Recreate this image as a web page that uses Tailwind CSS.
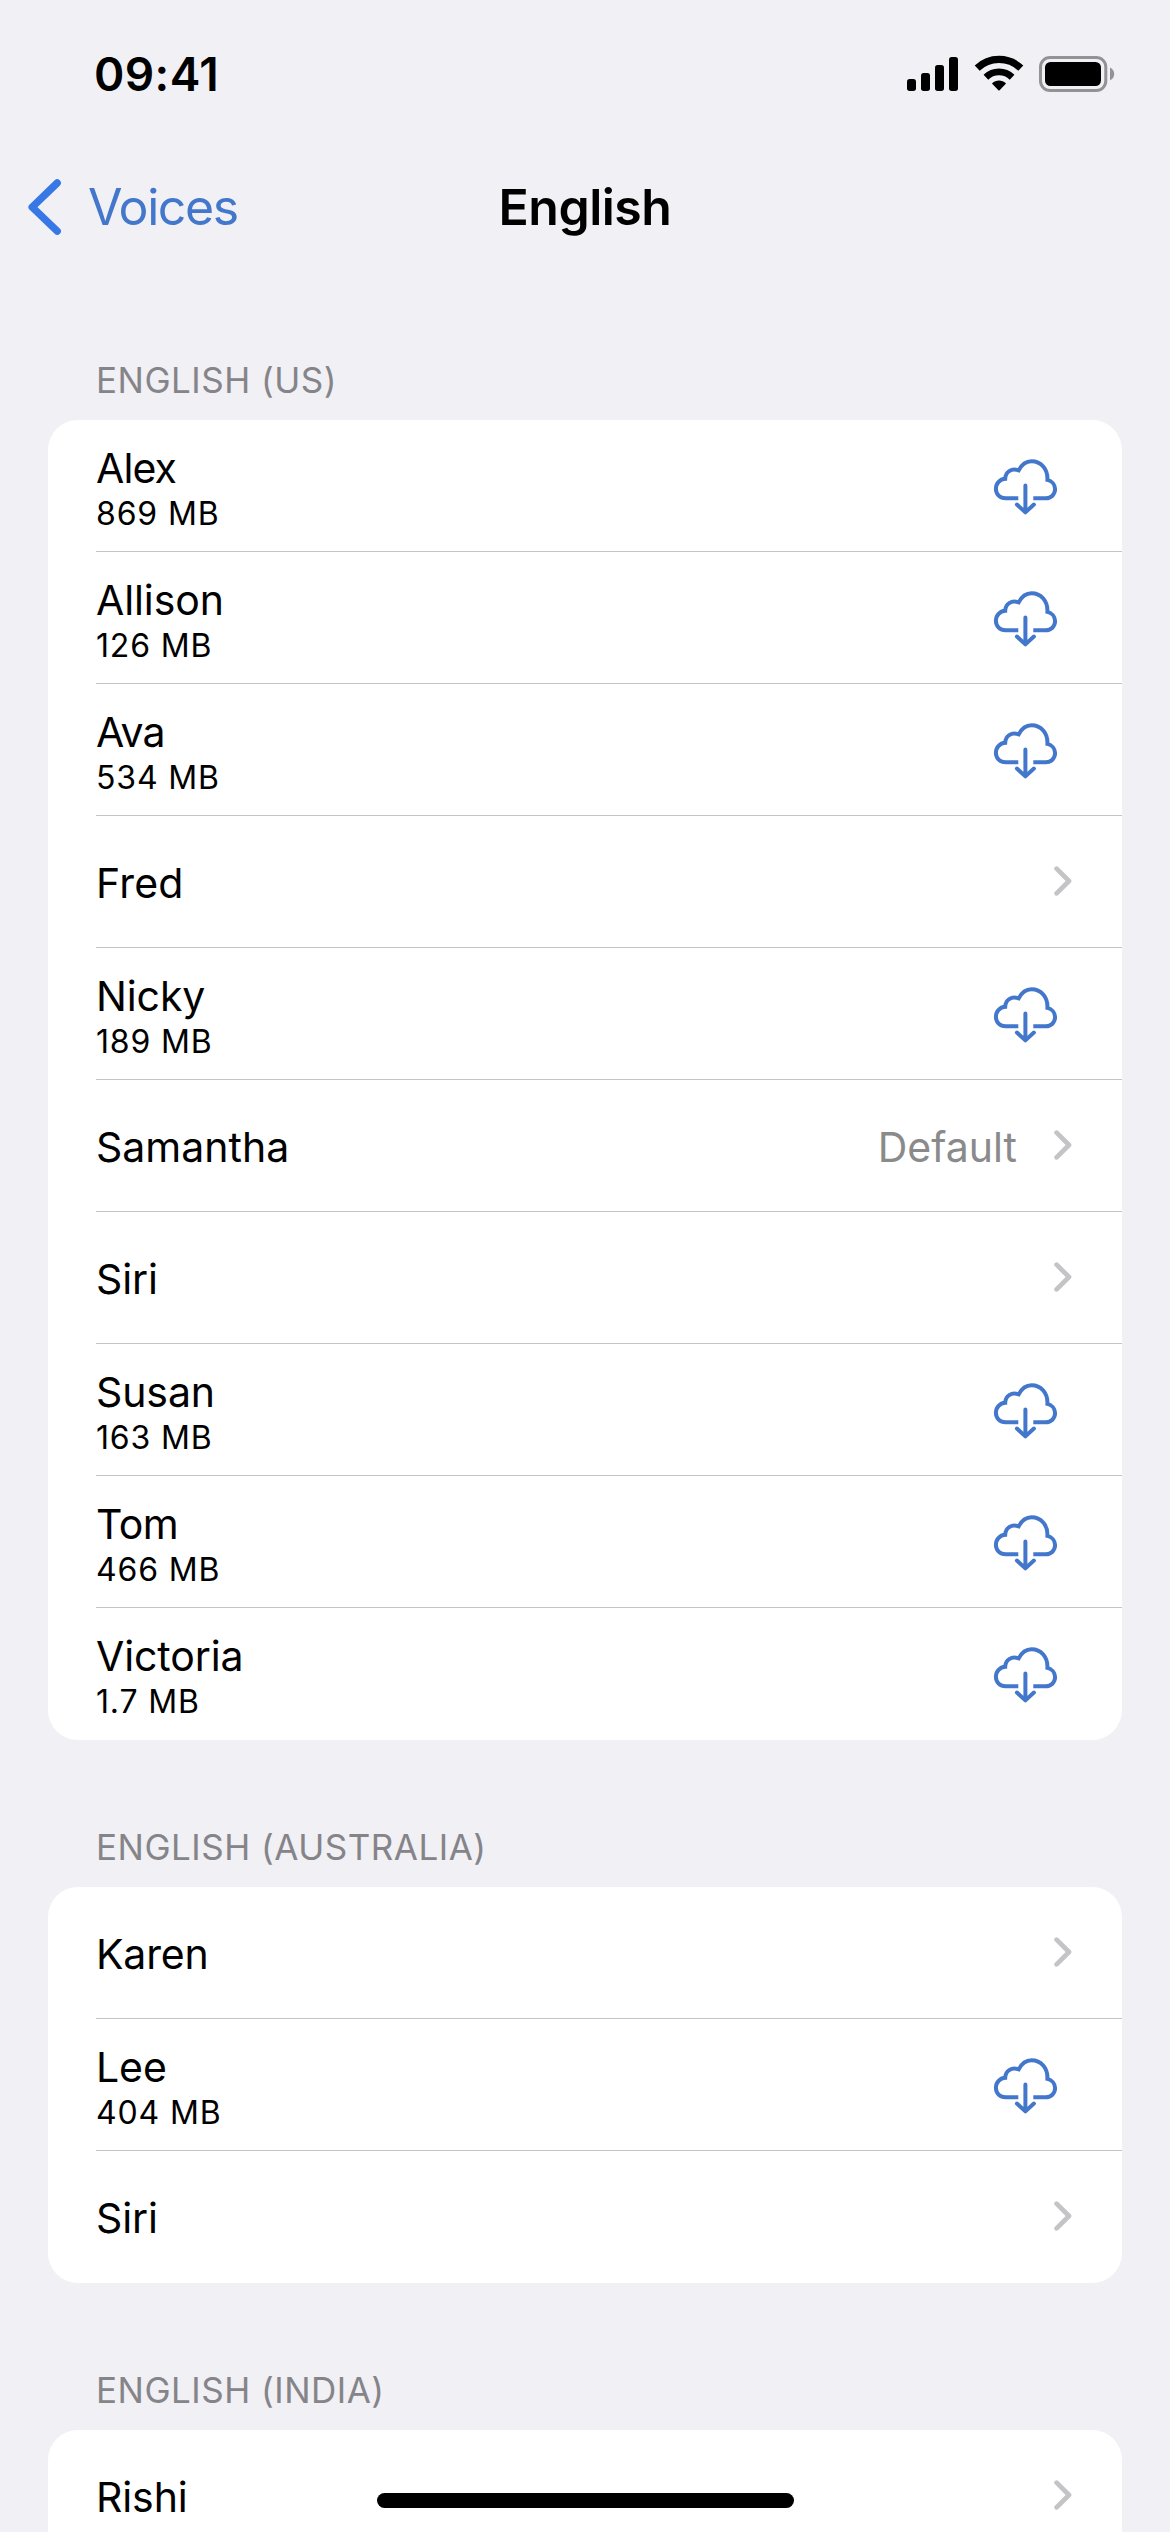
<!DOCTYPE html>
<html lang="en">
<head>
<meta charset="utf-8">
<title>English</title>
<script src="https://cdn.jsdelivr.net/npm/@tailwindcss/browser@4"></script>
</head>
<body class="bg-[#f1f0f5]">
<svg class="hidden">
  <symbol id="cloud" viewBox="0 0 66 60">
    <g fill="none" stroke="#4377cb" stroke-width="4">
      <path d="M26.3 41.3H13.6C8 41.3 3.9 37.2 3.9 31.8C3.9 26.4 8 22.2 13.2 21.8C13.4 15.2 19.2 10.8 26.7 13.4C29.5 8 34 4.3 39.5 4.3C49 4.3 56 12 55.4 22.9C59.8 24 63.1 27.5 63.1 32.1C63.1 37.5 59 41.3 53.8 41.3H41.3"/>
      <path d="M33.4 28.4V55M24.9 47.5L33.4 55.4L41.9 47.5" stroke-linecap="round" stroke-linejoin="round"/>
    </g>
  </symbol>
  <symbol id="chev" viewBox="0 0 18 30">
    <path d="M2.6 2.7L15 15L2.6 27.3" fill="none" stroke="#c4c4c6" stroke-width="4.7" stroke-linecap="round" stroke-linejoin="round"/>
  </symbol>
</svg>

<div class="relative w-[1170px] h-[2532px] overflow-hidden flex flex-col font-['Inter',sans-serif] text-black">
  <header class="h-[148px] shrink-0 flex justify-between pl-[94px] pr-[55px]">
    <div class="mt-[46px] h-[56px] leading-[56px] text-[46px] font-semibold tracking-[0.42px]">09:41</div>
    <div class="flex pt-[55px]">
      <svg class="w-[51px] h-[36px] mr-[16px]" viewBox="0 0 51 36">
        <rect x="0" y="24" width="9" height="12" rx="2.7"/><rect x="14" y="18" width="9" height="18" rx="2.7"/><rect x="28" y="10" width="9" height="26" rx="2.7"/><rect x="42" y="2" width="9" height="34" rx="2.7"/>
      </svg>
      <svg class="w-[50px] h-[36px] mr-[15px]" viewBox="0 0 50 36">
        <path d="M3.2 13.2A31.5 31.5 0 0 1 46.8 13.2" fill="none" stroke="#000" stroke-width="7.2"/>
        <path d="M11.9 22.2A19 19 0 0 1 38.1 22.2" fill="none" stroke="#000" stroke-width="6.8"/>
        <path d="M25 25.5C27.6 25.5 30 26.4 31.6 27.9Q32.2 28.5 31.6 29.1L25.6 35.3Q25 35.9 24.4 35.3L18.4 29.1Q17.8 28.5 18.4 27.9C20 26.4 22.4 25.5 25 25.5Z"/>
      </svg>
      <svg class="w-[76px] h-[38px]" viewBox="0 0 76 38">
        <rect x="1.5" y="2.5" width="65.3" height="33" rx="9.5" fill="none" stroke="#929297" stroke-width="3"/>
        <rect x="6" y="7" width="56" height="24" rx="5.5"/>
        <path d="M71 12.5Q75.2 14.5 75.2 19Q75.2 23.5 71 25.3Z" fill="#929297"/>
      </svg>
    </div>
  </header>

  <nav class="h-[117px] shrink-0 grid grid-cols-3 items-start">
    <div class="flex items-center pl-[27px] mt-[29px] h-[60px] text-[#4377cb]">
      <svg class="w-[35px] h-[58px] mr-[26px] shrink-0" viewBox="0 0 35 58"><path d="M30.2 5L5.2 29.2L30.2 53.2" fill="none" stroke="#3778e6" stroke-width="7.4" stroke-linecap="round" stroke-linejoin="round"/></svg>
      <span class="text-[50px] leading-[60px] tracking-[-1.4px]">Voices</span>
    </div>
    <h1 class="mt-[29px] text-center text-[50px] leading-[60px] font-semibold tracking-[-0.5px]">English</h1>
  </nav>

  <main id="list" class="px-12 flex flex-col"></main>

  <div class="absolute left-[377px] top-[2493px] w-[417px] h-[15px] rounded-full bg-black"></div>
</div>

<script>
const sections = [
  ['ENGLISH (US)', 'h-[155px]', [['Alex','869 MB'],['Allison','126 MB'],['Ava','534 MB'],['Fred'],['Nicky','189 MB'],['Samantha','','Default'],['Siri'],['Susan','163 MB'],['Tom','466 MB'],['Victoria','1.7 MB']]],
  ['ENGLISH (AUSTRALIA)', 'h-[147px]', [['Karen'],['Lee','404 MB'],['Siri']]],
  ['ENGLISH (INDIA)', 'h-[147px]', [['Rishi']]]
];
const tracking = {Alex:'tracking-[-0.9px]', Ava:'tracking-[-0.9px]', Tom:'tracking-[-0.5px]', Karen:'tracking-[-0.2px]', Samantha:'tracking-[0px]', Fred:'tracking-[0.2px]'};
const row = ([name, size, value], last) => `
  <div class="h-[132px] pl-12 flex">
    <div class="flex-1 flex justify-between ${last ? '' : 'border-b border-[#c4c4c7]'}">
      <div class="flex flex-col ${size ? 'pt-[23px]' : 'pt-[42px]'}">
        <span class="text-[41px] leading-[50px] ${tracking[name] || 'tracking-[-0.1px]'}">${name}</span>
        ${size ? `<span class="pt-px text-[32px] leading-[40px] tracking-[0.85px]">${size}</span>` : ''}
      </div>
      ${size ? '<svg class="w-[66px] h-[60px] mt-[37px] mr-[64px]"><use href="#cloud"/></svg>'
        : `<div class="flex pr-[50px]">${value ? `<span class="pt-[42px] mr-[37px] text-[41px] leading-[50px] text-[#8a8a8b]">${value}</span>` : ''}<svg class="w-[18px] h-[30px] mt-[50px]"><use href="#chev"/></svg></div>`}
    </div>
  </div>`;
document.getElementById('list').innerHTML = sections.map(([title, h, rows]) => `
  <section>
    <h2 class="${h} pl-12 pb-[18px] flex items-end text-[35px] leading-[44px] tracking-[0.5px] text-[#858489]">${title}</h2>
    <div class="bg-white rounded-[30px]">${rows.map((r, i) => row(r, i === rows.length - 1)).join('')}</div>
  </section>`).join('');
</script>
</body>
</html>
